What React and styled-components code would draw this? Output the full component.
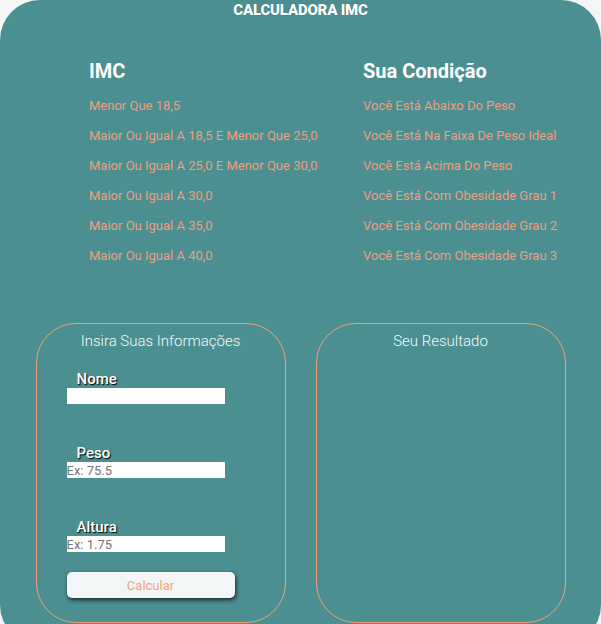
import React from "react";
import styled, { createGlobalStyle } from "styled-components";

const Global = createGlobalStyle`
  html, body { margin: 0; padding: 0; background: #f3f6f6; }
  body { font-family: Roboto, "Liberation Sans", sans-serif; }
  * { box-sizing: border-box; }
`;

const Page = styled.div`
  background: #4b8f91;
  border-radius: 40px;
  min-height: 645px;
  padding-top: 2px;
`;

const Title = styled.h1`
  margin: 0;
  text-align: center;
  color: #ffffff;
  font-size: 15px;
  line-height: 17px;
  font-weight: 900;
  letter-spacing: -0.2px;
  text-shadow: 0 0 1px rgba(0, 0, 0, 0.35);
`;

const Table = styled.div`
  display: grid;
  grid-template-columns: 274px 1fr;
  padding-left: 89px;
  margin-top: 40px;
`;

const Column = styled.div`
  display: flex;
  flex-direction: column;
`;

const Heading = styled.h2`
  margin: 0 0 8px;
  color: #ffffff;
  font-size: 20px;
  line-height: 24px;
  font-weight: 700;
`;

const Item = styled.div`
  color: #f29d7b;
  font-size: 13px;
  line-height: 30px;
  white-space: nowrap;
`;

const Panels = styled.div`
  display: flex;
  justify-content: center;
  gap: 30px;
  margin-top: 52px;
`;

const Panel = styled.section`
  width: 250px;
  height: 300px;
  border: 1px solid #f0a07a;
  border-radius: 40px;
  display: flex;
  flex-direction: column;
  padding: 7px 0 0 30px;
`;

const PanelTitle = styled.h3`
  margin: 0 0 0 -30px;
  text-align: center;
  color: #f4fbfb;
  font-size: 15px;
  line-height: 20px;
  font-weight: 300;
`;

const Field = styled.div`
  display: flex;
  flex-direction: column;
  align-items: flex-start;
  margin-top: ${(p) => p.$top}px;
`;

const Label = styled.label`
  color: #ffffff;
  font-size: 15px;
  line-height: 18px;
  font-weight: 500;
  padding-left: 10px;
  text-shadow: 1px 1px 1px #000;
`;

const Input = styled.input`
  width: 158px;
  height: 16px;
  border: none;
  outline: none;
  padding: 0;
  margin: 0;
  background: #ffffff;
  font-family: Roboto, "Liberation Sans", sans-serif;
  font-size: 13px;
  color: #333;
  &::placeholder { color: #757575; }
`;

const Button = styled.button`
  margin-top: 20px;
  width: 168px;
  height: 26px;
  border: none;
  border-radius: 5px;
  background: #f3f6f6;
  color: #f4a07f;
  font-family: Roboto, "Liberation Sans", sans-serif;
  font-size: 13px;
  box-shadow: 1px 2px 4px rgba(0, 0, 0, 0.75);
  cursor: pointer;
`;

const imc = [
  "Menor Que 18,5",
  "Maior Ou Igual A 18,5 E Menor Que 25,0",
  "Maior Ou Igual A 25,0 E Menor Que 30,0",
  "Maior Ou Igual A 30,0",
  "Maior Ou Igual A 35,0",
  "Maior Ou Igual A 40,0",
];

const cond = [
  "Você Está Abaixo Do Peso",
  "Você Está Na Faixa De Peso Ideal",
  "Você Está Acima Do Peso",
  "Você Está Com Obesidade Grau 1",
  "Você Está Com Obesidade Grau 2",
  "Você Está Com Obesidade Grau 3",
];

export default function App() {
  return (
    <>
      <Global />
      <Page>
        <Title>CALCULADORA IMC</Title>
        <Table>
          <Column>
            <Heading>IMC</Heading>
            {imc.map((t) => (
              <Item key={t}>{t}</Item>
            ))}
          </Column>
          <Column>
            <Heading>Sua Condição</Heading>
            {cond.map((t) => (
              <Item key={t}>{t}</Item>
            ))}
          </Column>
        </Table>
        <Panels>
          <Panel>
            <PanelTitle>Insira Suas Informações</PanelTitle>
            <Field $top={19}>
              <Label>Nome</Label>
              <Input type="text" />
            </Field>
            <Field $top={40}>
              <Label>Peso</Label>
              <Input type="text" placeholder="Ex: 75.5" />
            </Field>
            <Field $top={40}>
              <Label>Altura</Label>
              <Input type="text" placeholder="Ex: 1.75" />
            </Field>
            <Button>Calcular</Button>
          </Panel>
          <Panel>
            <PanelTitle>Seu Resultado</PanelTitle>
          </Panel>
        </Panels>
      </Page>
    </>
  );
}
